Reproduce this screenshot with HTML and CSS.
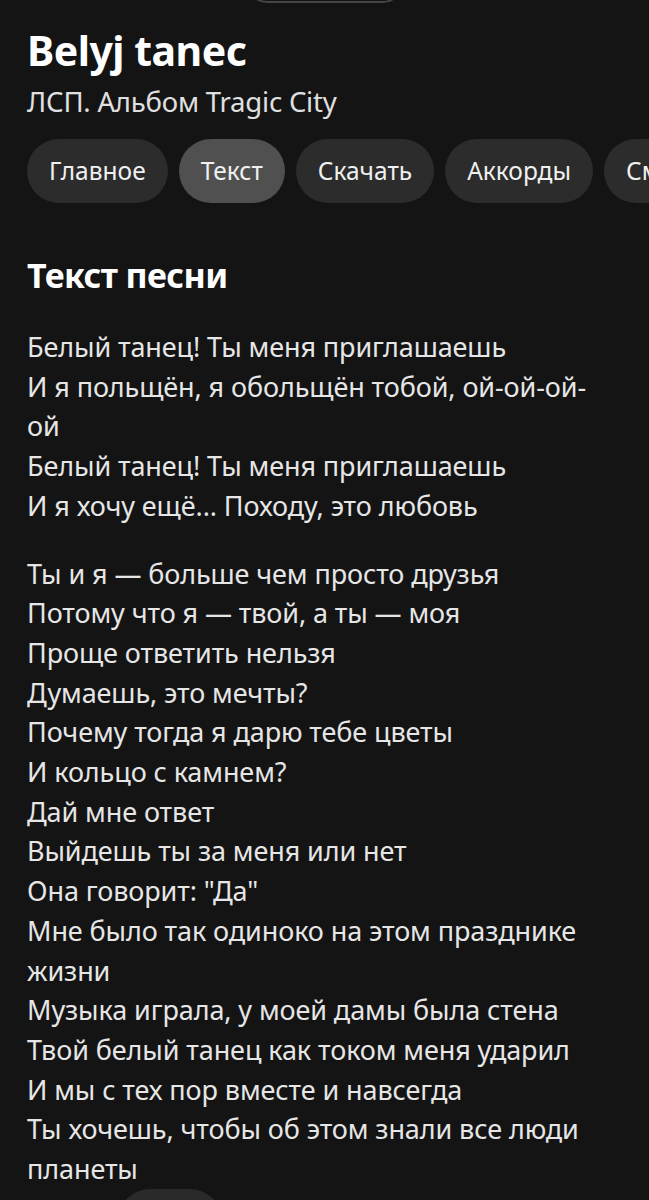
FILE: index.html
```html
<!DOCTYPE html>
<html lang="ru">
<head>
<meta charset="utf-8">
<link rel="stylesheet" href="styles.css">
</head>
<body>
<div class="handle"></div>
<header class="head">
  <h1 class="title">Belyj tanec</h1>
  <div class="subtitle">ЛСП. Альбом Tragic City</div>
</header>
<nav class="tabs">
  <span class="chip">Главное</span>
  <span class="chip active">Текст</span>
  <span class="chip">Скачать</span>
  <span class="chip">Аккорды</span>
  <span class="chip">Смотреть</span>
</nav>
<section class="lyrics">
  <h2 class="section-title">Текст песни</h2>
  <p class="verse">Белый танец! Ты меня приглашаешь<br>И я польщён, я обольщён тобой, ой-ой-ой-ой<br>Белый танец! Ты меня приглашаешь<br>И я хочу ещё... Походу, это любовь</p>
  <p class="verse">Ты и я — больше чем просто друзья<br>Потому что я — твой, а ты — моя<br>Проще ответить нельзя<br>Думаешь, это мечты?<br>Почему тогда я дарю тебе цветы<br>И кольцо с камнем?<br>Дай мне ответ<br>Выйдешь ты за меня или нет<br>Она говорит: "Да"<br>Мне было так одиноко на этом празднике жизни<br>Музыка играла, у моей дамы была стена<br>Твой белый танец как током меня ударил<br>И мы с тех пор вместе и навсегда<br>Ты хочешь, чтобы об этом знали все люди планеты</p>
  <div class="more"><span class="more-btn"></span></div>
</section>
</body>
</html>
```
FILE: styles.css
```css
html, body {
  margin: 0;
  padding: 0;
  background: #141414;
}
body {
  font-family: "Noto Sans", "Open Sans", sans-serif;
  color: #ececec;
  overflow: hidden;
  height: 1200px;
}
.handle {
  width: 156px;
  height: 40px;
  margin: -37px auto 0;
  border: 2px solid #444;
  border-radius: 22px;
  box-sizing: border-box;
}
.head {
  padding: 0 27px;
  margin-top: 21px;
}
.title {
  margin: 0;
  font-size: 41px;
  font-weight: 700;
  line-height: 52px;
  color: #fff;
  letter-spacing: -0.5px;
}
.subtitle {
  margin-top: 9px;
  font-size: 27.5px;
  line-height: 34px;
  color: #e0e0e0;
  letter-spacing: -0.2px;
}
.tabs {
  display: flex;
  gap: 11px;
  padding: 0 27px;
  margin-top: 20px;
  white-space: nowrap;
  overflow: hidden;
}
.chip {
  flex: none;
  height: 64px;
  line-height: 64px;
  padding: 0 22px;
  border-radius: 32px;
  background: #2c2c2c;
  font-size: 24.5px;
  color: #f0f0f0;
}
.chip.active {
  background: #505050;
}
.lyrics {
  padding: 0 40px 0 27px;
}
.section-title {
  margin: 50px 0 0;
  font-size: 34px;
  font-weight: 700;
  line-height: 44px;
  color: #fff;
  letter-spacing: -0.6px;
}
.verse {
  margin: 30px 0 0;
  font-size: 27px;
  line-height: 39.7px;
  color: #e6e6e6;
  letter-spacing: -0.1px;
}
.verse + .verse {
  margin-top: 28px;
}
.more {
  display: flex;
  padding-left: 91px;
  margin-top: 0;
}
.more-btn {
  width: 104px;
  height: 64px;
  border-radius: 32px;
  background: #2a2a2a;
}
```
